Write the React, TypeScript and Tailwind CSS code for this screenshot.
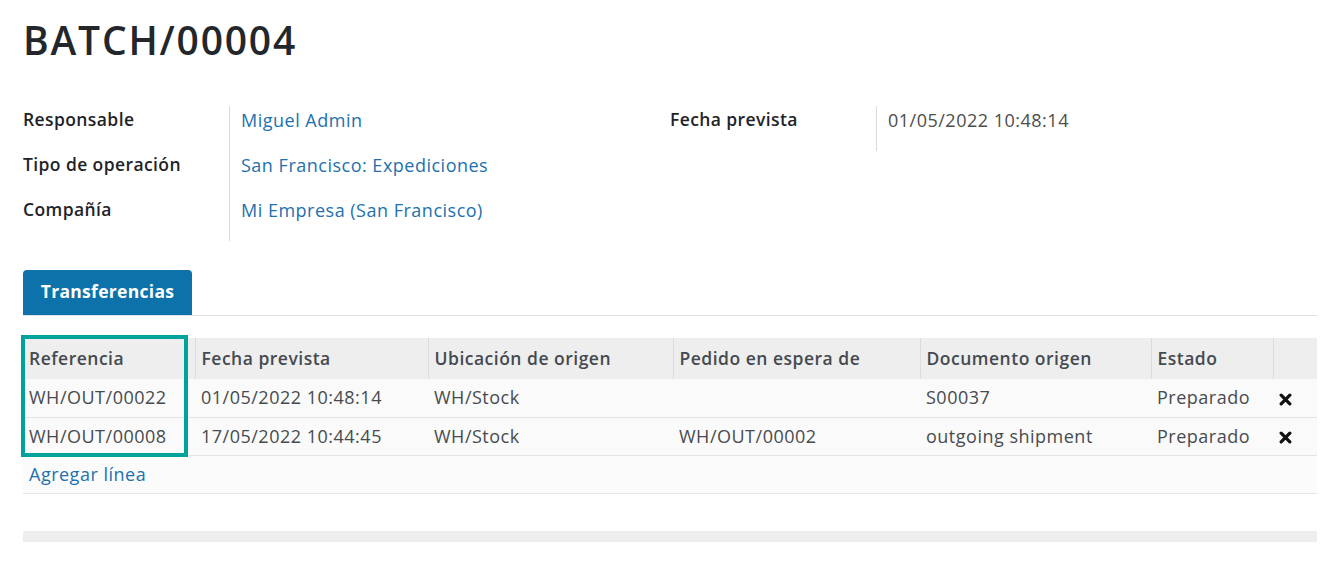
import * as React from "react";

const font = { fontFamily: '"Open Sans", "Noto Sans", sans-serif' };

type Field = { label: string; value: string; link?: boolean };

const leftFields: Field[] = [
  { label: "Responsable", value: "Miguel Admin", link: true },
  { label: "Tipo de operación", value: "San Francisco: Expediciones", link: true },
  { label: "Compañía", value: "Mi Empresa (San Francisco)", link: true },
];

const rightFields: Field[] = [{ label: "Fecha prevista", value: "01/05/2022 10:48:14" }];

const columns = [
  { name: "Referencia", w: "w-[172px]" },
  { name: "Fecha prevista", w: "w-[233px]" },
  { name: "Ubicación de origen", w: "w-[245px]" },
  { name: "Pedido en espera de", w: "w-[247px]" },
  { name: "Documento origen", w: "w-[231px]" },
  { name: "Estado", w: "w-[122px]" },
  { name: "", w: "w-[44px]" },
];

const rows = [
  ["WH/OUT/00022", "01/05/2022 10:48:14", "WH/Stock", "", "S00037", "Preparado"],
  ["WH/OUT/00008", "17/05/2022 10:44:45", "WH/Stock", "WH/OUT/00002", "outgoing shipment", "Preparado"],
];

const FieldGroup = ({ fields }: { fields: Field[] }): JSX.Element => (
  <div className="grid grid-cols-[206px_1fr]">
    <div className="flex flex-col">
      {fields.map((f) => (
        <div key={f.label} className="h-[45px] text-[17.5px] font-semibold leading-[26px] tracking-[0.4px] text-[#1f2328]">
          {f.label}
        </div>
      ))}
    </div>
    <div className="flex flex-col border-l border-[#d9d9d9] pl-[11px]">
      {fields.map((f) => (
        <div
          key={f.label}
          className={`h-[45px] text-[18px] leading-[28px] tracking-[0.5px] ${f.link ? "text-[#2271ad]" : "text-[#4d4d4d]"}`}
        >
          {f.value}
        </div>
      ))}
    </div>
  </div>
);

const RemoveIcon = (): JSX.Element => (
  <svg width="13" height="13" viewBox="0 0 12 12" className="inline-block">
    <path d="M2 2 L10 10 M10 2 L2 10" stroke="#111" strokeWidth="3" strokeLinecap="round" />
  </svg>
);

const App = (): JSX.Element => {
  return (
    <div className="min-h-[562px] w-[1335px] bg-white pl-[23px] pr-[18px] pt-[14px]" style={font}>
      <h1 className="text-[39px] font-semibold leading-[52px] tracking-[1.8px] text-[#23272b]">BATCH/00004</h1>

      <div className="mt-[40px] grid grid-cols-[647px_1fr]">
        <FieldGroup fields={leftFields} />
        <div className="self-start">
          <FieldGroup fields={rightFields} />
        </div>
      </div>

      <div className="mt-[29px] flex items-end border-b border-[#dee2e6]">
        <div className="flex h-[45px] w-[169px] items-center justify-center rounded-t-[4px] bg-[#0c72a9] pb-[3px] text-[17.5px] font-bold tracking-[0.3px] text-white">
          Transferencias
        </div>
      </div>

      <div className="relative mt-[22px]">
        <table className="w-full table-fixed border-collapse text-[18px] tracking-[0.5px]">
          <thead>
            <tr className="h-[41px] bg-[#eeeeee]">
              {columns.map((c, i) => (
                <th
                  key={i}
                  className={`${c.w} px-[6px] pb-[1px] text-left text-[17.5px] font-semibold text-[#454a50] ${i > 0 ? "border-l border-[#dcdcdc]" : ""}`}
                >
                  {c.name}
                </th>
              ))}
            </tr>
          </thead>
          <tbody className="text-[#474b4f]">
            {rows.map((r) => (
              <tr key={r[0]} className="h-[38px] border-b border-[#e4e4e4] bg-[#fafafa]">
                {r.map((cell, i) => (
                  <td key={i} className="whitespace-nowrap px-[6px]">
                    {cell}
                  </td>
                ))}
                <td className="px-[6px]">
                  <RemoveIcon />
                </td>
              </tr>
            ))}
            <tr className="h-[38px] border-b border-[#e4e4e4] bg-[#fbfbfb]">
              <td colSpan={7} className="px-[6px] text-[#2271ad]">
                Agregar línea
              </td>
            </tr>
          </tbody>
        </table>
        <div className="pointer-events-none absolute left-[-2px] top-[-3px] h-[122px] w-[167px] border-4 border-[#00a39b]" />
      </div>

      <div className="mt-[37px] h-[11px] w-full bg-[#eeeeee]" />
    </div>
  );
};

export default App;
